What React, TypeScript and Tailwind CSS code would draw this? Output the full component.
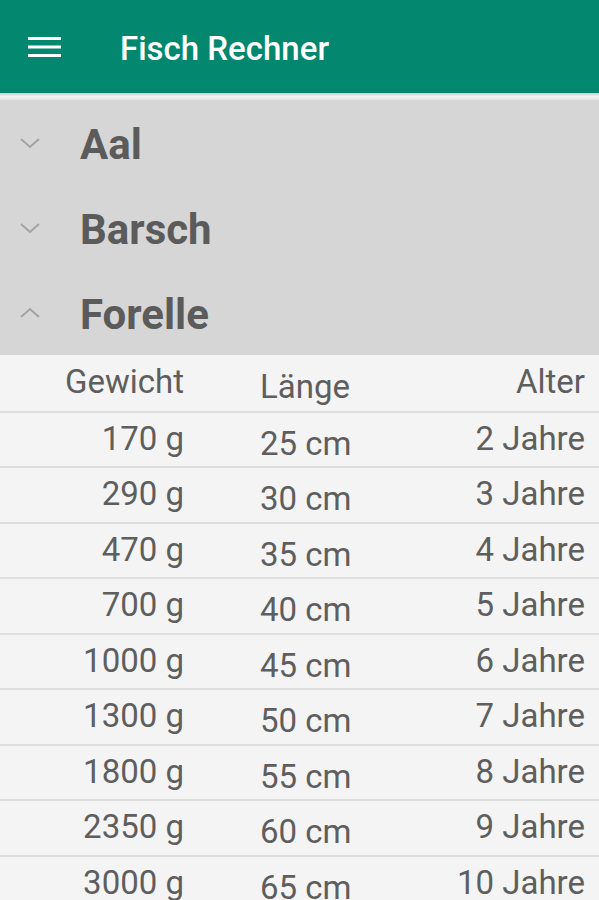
import React from "react";

const rows: [string, string, string][] = [
  ["170 g", "25 cm", "2 Jahre"],
  ["290 g", "30 cm", "3 Jahre"],
  ["470 g", "35 cm", "4 Jahre"],
  ["700 g", "40 cm", "5 Jahre"],
  ["1000 g", "45 cm", "6 Jahre"],
  ["1300 g", "50 cm", "7 Jahre"],
  ["1800 g", "55 cm", "8 Jahre"],
  ["2350 g", "60 cm", "9 Jahre"],
  ["3000 g", "65 cm", "10 Jahre"],
];

function Chevron({ up }: { up?: boolean }) {
  return (
    <svg width="22" height="12" viewBox="0 0 22 12" className="shrink-0">
      <path
        d={up ? "M2 10 L11 2 L20 10" : "M2 2 L11 10 L20 2"}
        fill="none"
        stroke="#a3a3a3"
        strokeWidth="2"
      />
    </svg>
  );
}

function FishRow({ name, up }: { name: string; up?: boolean }) {
  return (
    <div className="flex h-[85px] items-center">
      <div className="w-[80px] pl-[19px]">
        <Chevron up={up} />
      </div>
      <span className="text-[42px] font-bold text-[#5b5b5b] leading-none pt-[5px]">{name}</span>
    </div>
  );
}

function Row({ a, b, c, header }: { a: string; b: string; c: string; header?: boolean }) {
  return (
    <div
      className={`grid grid-cols-[184px_1fr_auto] h-[55.5px] pr-[14px] text-[33px] text-[#5e5e5e] ${
        header ? "" : "border-t-2 border-[#dedede]"
      }`}
    >
      <div className="text-right self-center leading-none pb-[2px]">{a}</div>
      <div className="pl-[76px] self-center leading-none pt-[8px]">{b}</div>
      <div className="text-right self-center leading-none pb-[2px]">{c}</div>
    </div>
  );
}

export default function App() {
  return (
    <div className="w-[599px] h-[900px] overflow-hidden bg-[#f4f4f4]" style={{ fontFamily: "Roboto, 'Noto Sans', sans-serif" }}>
      <div className="h-[93px] bg-[#03876f] flex items-center">
        <div className="w-[120px] pl-[28px]">
          <svg width="33" height="20" viewBox="0 0 33 20">
            <rect x="0" y="0" width="33" height="3" fill="#fff" />
            <rect x="0" y="8.5" width="33" height="3" fill="#fff" />
            <rect x="0" y="17" width="33" height="3" fill="#fff" />
          </svg>
        </div>
        <span className="text-white text-[33px] font-medium pt-[4px]">Fisch Rechner</span>
      </div>
      <div className="h-[7px] bg-gradient-to-b from-[#c9c9c9] via-[#f2f2f2] to-[#e4e4e4]" />
      <div className="bg-[#d6d6d6]">
        <FishRow name="Aal" />
        <FishRow name="Barsch" />
        <FishRow name="Forelle" up />
      </div>
      <div>
        <Row a="Gewicht" b="Länge" c="Alter" header />
        {rows.map((r) => (
          <Row key={r[0]} a={r[0]} b={r[1]} c={r[2]} />
        ))}
      </div>
    </div>
  );
}
